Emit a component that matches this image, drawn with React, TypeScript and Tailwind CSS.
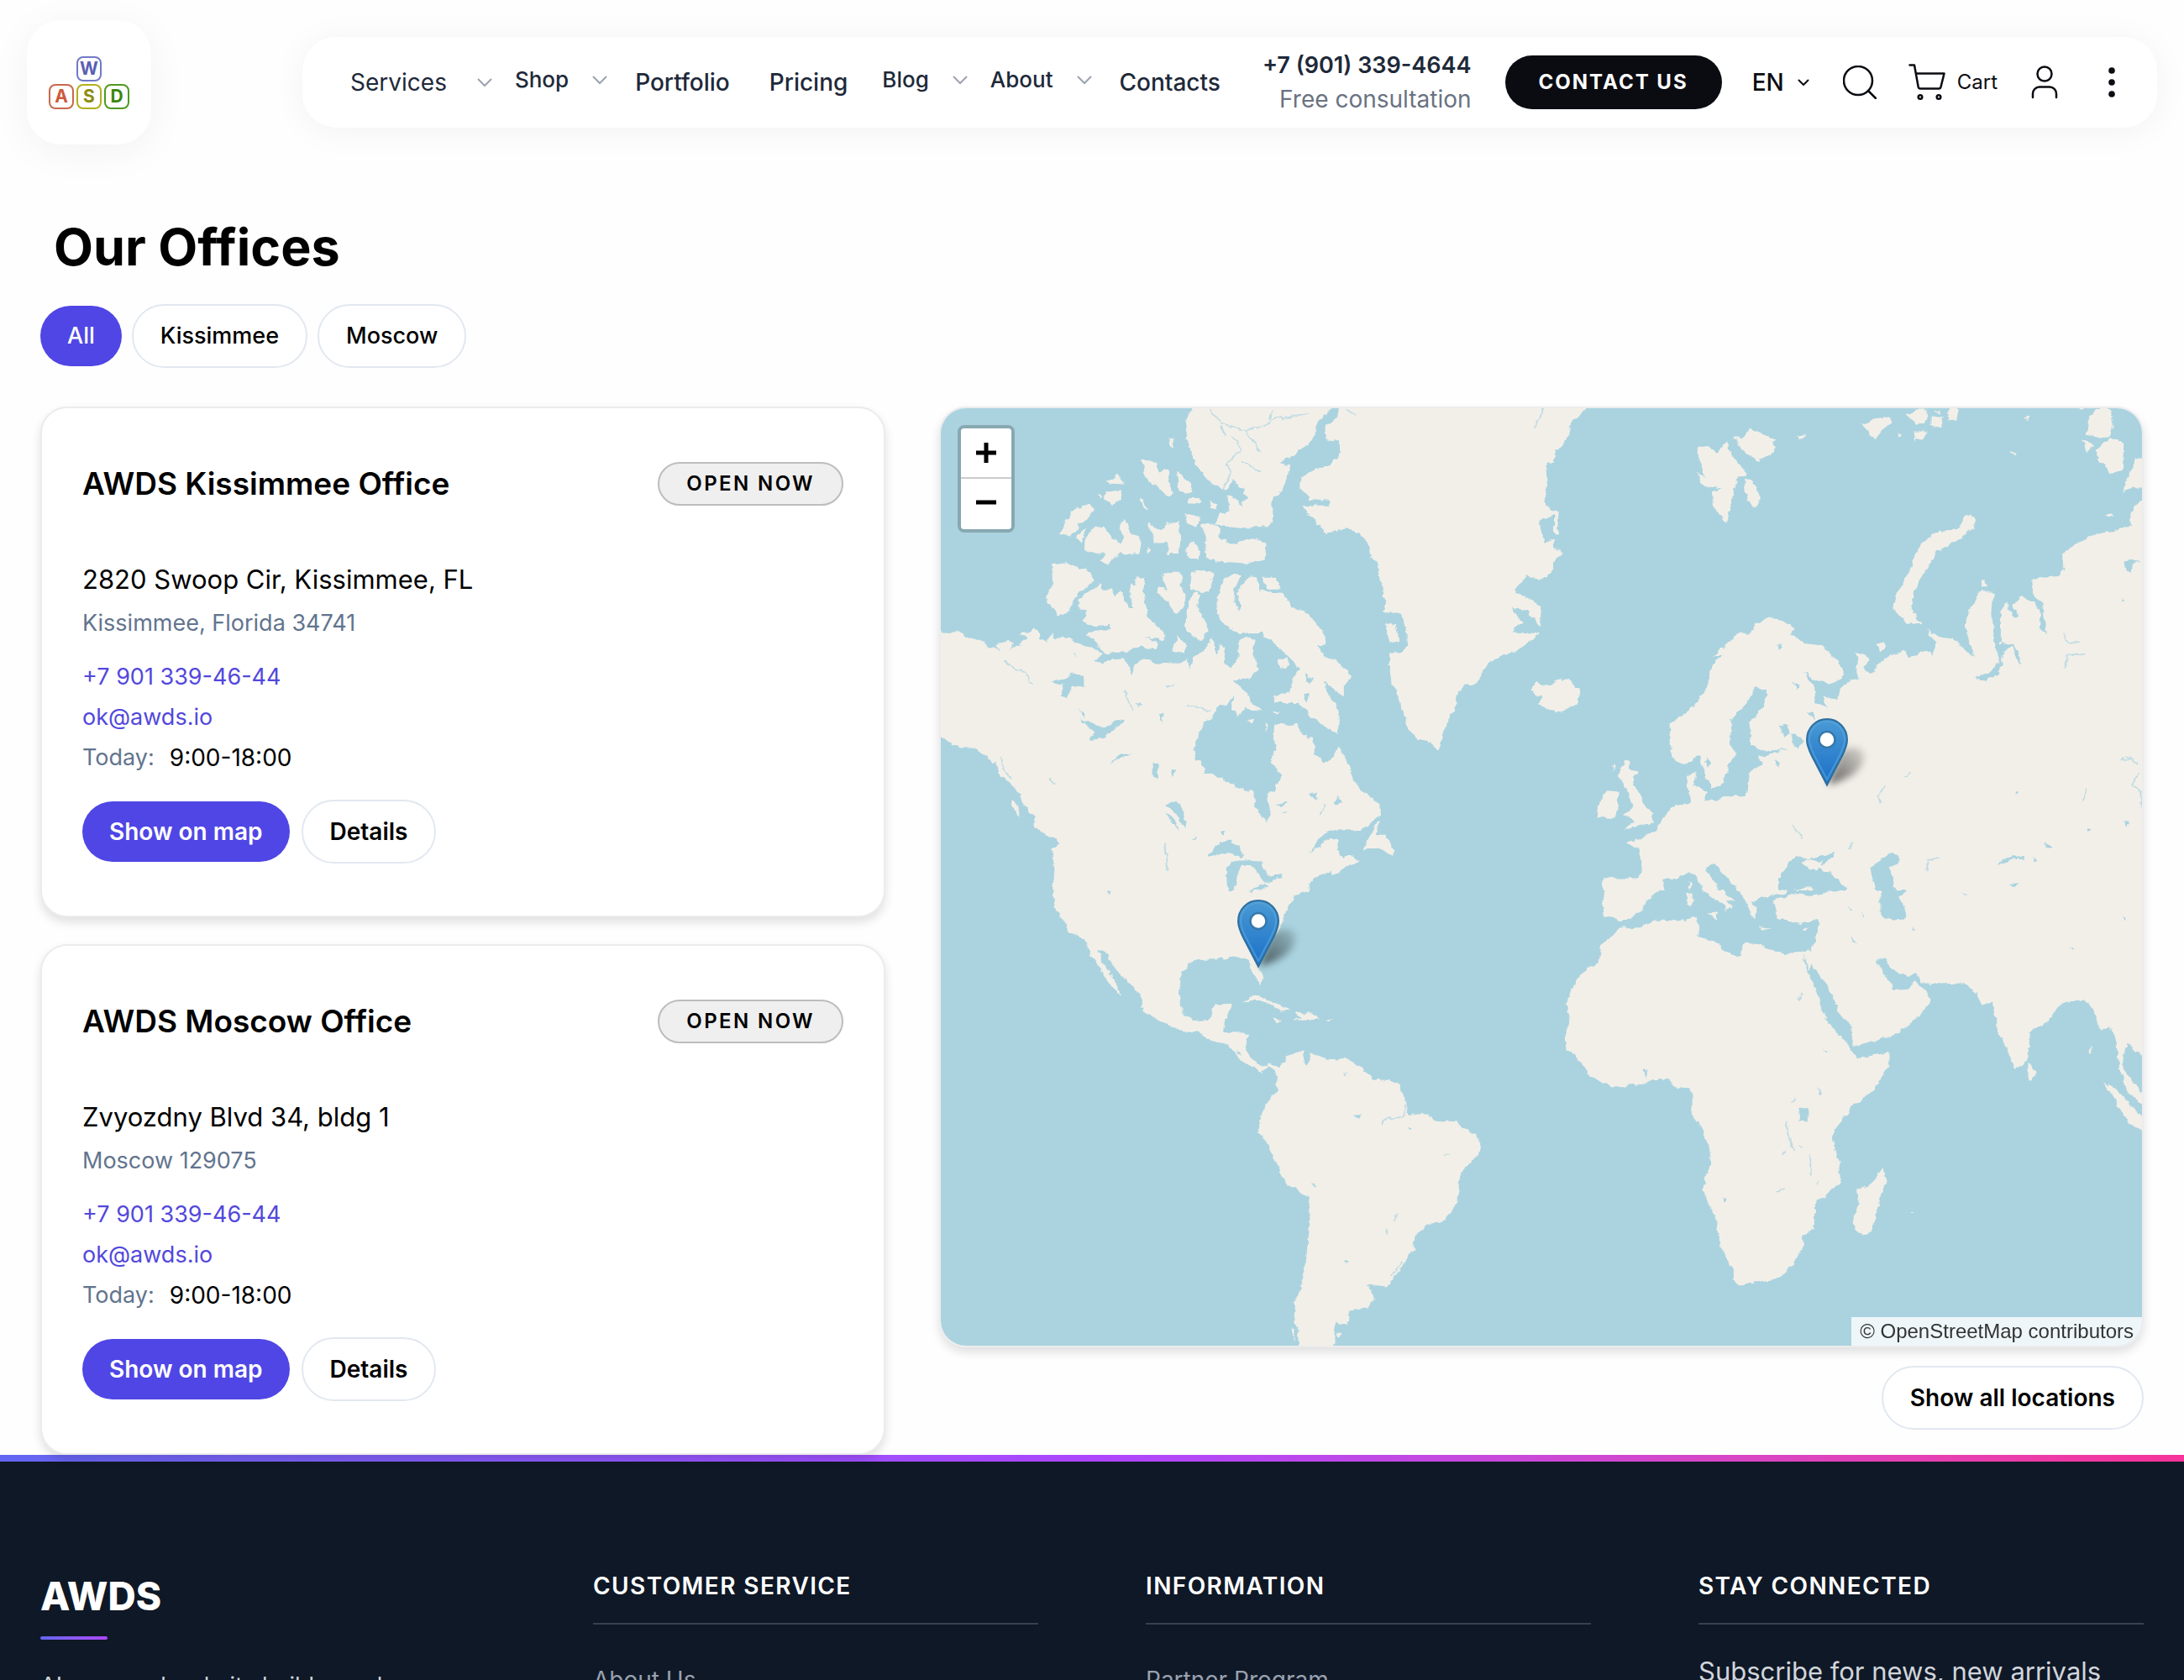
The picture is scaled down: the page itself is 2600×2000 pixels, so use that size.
import { ReactNode } from "react";

const bodyFont = "font-['Inter','Noto_Sans',sans-serif]";

/* ---------- Logo ---------- */

const keys = [
  { letter: "W", x: 34, y: 1, stroke: "#7179c6", fill: "#5a60b4" },
  { letter: "A", x: 1, y: 34, stroke: "#c8684c", fill: "#cc5a38" },
  { letter: "S", x: 34, y: 34, stroke: "#b2b01c", fill: "#8c8c10" },
  { letter: "D", x: 67, y: 34, stroke: "#4f9a20", fill: "#3b860e" },
];

function Logo() {
  return (
    <svg viewBox="0 0 96 63" className="w-24" role="img" aria-label="AWDS">
      {keys.map((k) => (
        <g key={k.letter}>
          <rect x={k.x} y={k.y} width="28" height="28" rx="7" fill="none" stroke={k.stroke} strokeWidth="2" />
          <text x={k.x + 14} y={k.y + 21} textAnchor="middle" fontFamily="Inter, sans-serif" fontWeight="700" fontSize="21" fill={k.fill}>
            {k.letter}
          </text>
        </g>
      ))}
    </svg>
  );
}

/* ---------- Header ---------- */

function Chevron() {
  return (
    <svg viewBox="0 0 18 12" className="h-3 w-[18px]" fill="none" stroke="#9ca3af" strokeWidth="2" aria-hidden="true">
      <path d="M1 2l8 8 8-8" />
    </svg>
  );
}

function PlainLink({ children }: { children: ReactNode }) {
  return (
    <a href="#" className="px-3.5">
      {children}
    </a>
  );
}

function MenuLink({ children }: { children: ReactNode }) {
  return (
    <a href="#" className="flex items-center gap-7 pb-1.5 pl-2 text-[26px]">
      {children}
      <Chevron />
    </a>
  );
}

function Header() {
  return (
    <header className="flex items-center justify-between px-8 pt-6">
      <a
        href="#"
        className="flex size-[148px] items-center justify-center rounded-[40px] bg-white shadow-[0_8px_48px_rgba(0,0,0,0.05)]"
      >
        <Logo />
      </a>
      <div className="flex h-[108px] items-center rounded-[40px] bg-white pr-12 pl-[43px] text-[28px] leading-10 font-medium whitespace-nowrap text-[#1e2939] shadow-[0_4px_40px_rgba(0,0,0,0.05)]">
        <nav className="flex items-center gap-[19px]">
          <a href="#" className="flex items-center gap-9 pl-3.5 font-normal">
            Services
            <Chevron />
          </a>
          <MenuLink>Shop</MenuLink>
          <PlainLink>Portfolio</PlainLink>
          <PlainLink>Pricing</PlainLink>
          <MenuLink>Blog</MenuLink>
          <MenuLink>About</MenuLink>
          <PlainLink>Contacts</PlainLink>
        </nav>
        <div className="ml-9 flex flex-col text-right">
          <a href="tel:+79013394644" className="text-[27px] font-semibold">
            +7 (901) 339-4644
          </a>
          <span className="font-normal text-[#6a7282]">Free consultation</span>
        </div>
        <button className="ml-10 h-16 rounded-full bg-[#0a0c12] px-10 text-[24px] font-bold tracking-[2px] text-white">CONTACT US</button>
        <button className="ml-9 flex items-center gap-4 text-[#0a0c12]">
          EN
          <svg viewBox="0 0 14 9" className="h-[9px] w-3.5" fill="none" stroke="currentColor" strokeWidth="2" strokeLinecap="round" strokeLinejoin="round" aria-hidden="true">
            <path d="M1.5 1.5L7 7l5.500-5.500" />
          </svg>
        </button>
        <button className="ml-10" aria-label="Search">
          <svg viewBox="0 0 40 40" className="size-10" fill="none" stroke="#0a0c12" strokeWidth="2.500" strokeLinecap="round">
            <circle cx="18" cy="18" r="17" />
            <path d="M30 30l9 9" />
          </svg>
        </button>
        <a href="#" className="ml-[38px] flex items-center gap-3.5 text-[24px] font-normal text-[#0a0c12]">
          <svg viewBox="0 0 44 44" className="size-11" fill="none" stroke="currentColor" strokeWidth="2.500" strokeLinecap="round" strokeLinejoin="round" aria-hidden="true">
            <path d="M1.500 1.500H7l4.700 26a2.500 2.500 0 0 0 2.500 2H36a2.500 2.500 0 0 0 2.500-2L42.500 11.500H9" />
            <circle cx="14" cy="39.500" r="2.300" />
            <circle cx="36" cy="39.500" r="2.300" />
          </svg>
          Cart
        </a>
        <button className="ml-10" aria-label="Account">
          <svg viewBox="0 0 32 40" className="h-10 w-8" fill="none" stroke="#0a0c12" strokeWidth="2.500" strokeLinecap="round">
            <circle cx="16" cy="10" r="8.500" />
            <path d="M2 38v-4.500a8 8 0 0 1 8-8h12a8 8 0 0 1 8 8V38" />
          </svg>
        </button>
        <button className="ml-[58px]" aria-label="More">
          <svg viewBox="0 0 12 36" className="h-9 w-3" fill="#0a0c12">
            <circle cx="6" cy="4" r="3.800" />
            <circle cx="6" cy="18" r="3.800" />
            <circle cx="6" cy="32" r="3.800" />
          </svg>
        </button>
      </div>
    </header>
  );
}

/* ---------- Buttons ---------- */

const actionText = "text-[28px] font-semibold";
const filterText = "text-[27px] font-medium";

function PrimaryButton({ children, text = actionText }: { children: ReactNode; text?: string }) {
  return <button className={`h-[72px] rounded-[36px] bg-[#4f46e5] px-8 text-white ${text}`}>{children}</button>;
}

function OutlineButton({ children, text = actionText }: { children: ReactNode; text?: string }) {
  return <button className={`h-[76px] rounded-[38px] border-2 border-[#e2e8f0] bg-white px-8 text-black ${text}`}>{children}</button>;
}

/* ---------- Office cards ---------- */

type Office = { name: string; street: string; city: string };

const offices: Office[] = [
  { name: "AWDS Kissimmee Office", street: "2820 Swoop Cir, Kissimmee, FL", city: "Kissimmee, Florida 34741" },
  { name: "AWDS Moscow Office", street: "Zvyozdny Blvd 34, bldg 1", city: "Moscow 129075" },
];

function OfficeCard({ office }: { office: Office }) {
  return (
    <article className="relative z-10 rounded-[32px] border-2 border-[#ececee] bg-white px-12 pt-16 pb-[62px] text-[27px] leading-10 shadow-[0_6px_12px_rgba(0,0,0,0.12)]">
      <div className="flex items-center justify-between">
        <h2 className="text-[37px] leading-[52px] font-semibold">{office.name}</h2>
        <span className="flex h-[52px] items-center rounded-full border-2 border-[#bdbdbd] bg-[#efefef] px-8 text-[24px] font-semibold tracking-widest">
          OPEN NOW
        </span>
      </div>
      <p className="mt-16 text-[31px] leading-[48px]">{office.street}</p>
      <p className="mt-2 text-[#62748e]">{office.city}</p>
      <p className="mt-6">
        <a href="tel:+79013394644" className="text-[#5248dc]">
          +7 901 339-46-44
        </a>
      </p>
      <p className="mt-2">
        <a href="mailto:ok@awds.io" className="text-[#5248dc]">
          ok@awds.io
        </a>
      </p>
      <p className="mt-2 flex gap-[18px]">
        <span className="text-[#62748e]">Today:</span>
        <span className="text-[28px]">9:00-18:00</span>
      </p>
      <div className="mt-[30px] flex items-center gap-3.5">
        <PrimaryButton>Show on map</PrimaryButton>
        <OutlineButton>Details</OutlineButton>
      </div>
    </article>
  );
}

/* ---------- Map ---------- */

type Tile = { id: string; x: number; y: number; w: number; h: number; land: string; water?: string; rivers?: string; islands?: string };

const tiles: Tile[] = [
  {
    id: "nw",
    x: -20,
    y: -26,
    w: 750,
    h: 600,
    land: [
      "M-60 762L42 762 60 768 90 766 115 783 140 790 165 812 190 822 180 806 210 790 225 800 212 822 240 800 258 780 235 772 262 766 276 748 290 785 308 796 316 766 324 790 345 778 365 785 400 808 430 815 445 835 425 852 445 860 470 850 500 848 512 870 518 900 522 870 545 848 560 850 575 862 600 860 635 862 655 850 662 880 672 845 700 820 712 785 722 800 728 840 738 800 752 830 748 860 765 878 780 850 785 790 800 778 825 790 818 830 832 880 810 908 766 910 780 925 805 960 820 990 842 1008 820 1012 800 995 782 1025 765 1005 770 965 752 988 728 1000 715 1030 700 1045 685 1080 672 1120 674 1160 690 1165 700 1205 715 1205 760 1235 795 1258 820 1258 825 1310 850 1355 862 1330 855 1270 875 1255 887 1210 865 1165 877 1130 870 1090 872 1050 900 1055 925 1050 945 1085 968 1095 972 1140 998 1172 1020 1155 1030 1115 1045 1150 1060 1180 1068 1225 1085 1255 1110 1275 1132 1300 1133 1335 1110 1365 1085 1380 1010 1382 985 1405 958 1453 990 1422 1010 1405 1033 1410 1028 1440 1040 1465 1070 1462 1082 1475 1050 1495 1018 1525 1015 1508 975 1525 958 1550 955 1568V1600H320V1568L325 1500 318 1440 340 1420 330 1410 300 1395 275 1370 275 1340 250 1305 240 1270 215 1235 190 1215 175 1170 150 1145 120 1125 90 1125 60 1105 42 1095H-60Z",
      "M318 555L350 547 385 565 402 565 425 605 385 640 370 680 350 705 335 718 322 688 302 675 312 635 322 605Z",
      "M385 660L440 612 447 635 470 632 475 655 485 630 495 655 510 690 520 690 512 635 515 612 530 622 528 592 550 592 546 640 558 720 598 768 595 788 550 780 585 800 580 818 540 812 500 825 450 832 430 800 405 775 425 760 465 755 462 742 410 745 392 728 408 700 382 685Z",
      "M592 585L640 572 645 600 638 620 652 650 645 690 628 708 605 665 578 640 582 625 605 635Z",
      "M665 575L695 570 722 577 708 640 690 640 660 632Z",
      "M668 645L688 645 680 680 695 720 708 760 695 790 670 780 650 750 655 690Z",
      "M632 775L655 805 645 830 620 822Z",
      "M740 620L755 590 788 585 775 620 772 670 790 700 780 640 800 600 825 590 835 635 868 640 890 645 905 660 915 690 945 695 975 735 998 775 1000 805 975 805 1000 840 1030 855 1067 905 1045 930 1045 965 1015 935 995 915 1000 945 1030 1000 1035 1040 1028 1080 995 1055 960 1020 930 985 875 985 870 960 910 950 920 905 935 880 915 850 890 820 860 790 840 768 800 768 760 755 735 725 728 690 730 650Z",
      "M840 595L875 595 890 632 860 632Z",
      "M803 1045L822 1033 818 1050ZM848 1050L855 1052 850 1073ZM880 850L905 842 905 870 888 882ZM865 1010L885 1012 878 1025Z",
      "M690 428L720 425 735 445 735 470 770 490 800 480 825 472 852 490 848 540 800 550 730 545 700 530 703 480Z",
      "M650 500L670 485 688 510 682 542 655 525ZM552 500L563 508 556 520ZM650 395L688 405 680 440 655 425Z",
      "M555 422L575 440 590 450 600 425 635 420 638 480 635 520 605 520 605 485 575 490 570 460Z",
      "M400 480L425 432 450 440 468 470 490 490 498 470 488 430 500 410 512 455 535 465 543 490 535 522 485 520 460 552 438 545 450 520 400 512Z",
      "M338 460L350 420 380 378 412 365 422 380 410 415 385 425 385 445 360 465Z",
      "M452 300L485 273 498 305ZM455 328L492 322 488 350 468 372 448 350ZM432 330L445 340 438 350ZM380 470L405 435 390 488Z",
      "M542 230L565 226 590 265 605 260 618 340 600 335 580 310 560 300 548 270ZM630 268L660 300 668 330 650 338 632 305ZM655 345L688 345 685 362 657 362ZM608 160L620 165 622 190 612 185ZM537 345L545 350 557 388 548 380ZM712 355L730 365 725 385 715 378Z",
      "M665 68L680 40H1020L1012 68 985 105 970 150 950 190 925 205 915 220 885 235 912 245 905 280 890 330 870 345 865 375 872 410 855 440 800 440 725 430 735 400 760 385 755 340 775 345 790 370 805 345 790 315 765 290 760 315 740 320 715 300 685 260 670 220 660 190 650 160 655 110Z",
      "M1036 40L1030 90 1025 105 998 125 1000 165 1035 170 1035 205 1015 242 975 255 940 285 935 315 960 350 1010 355 1010 370 940 372 955 400 985 430 1000 460 1050 440 1085 460 1105 485 1110 520 1128 550 1140 620 1150 680 1140 700 1185 705 1200 760 1205 810 1185 830 1160 830 1160 910 1180 970 1205 1060 1230 1100 1255 1105 1278 1130 1290 1095 1300 1045 1320 1005 1325 960 1345 930 1375 925 1400 870 1420 850 1480 820 1534 766 1462 762 1490 735 1460 685 1500 700 1535 745 1535 680 1470 635 1500 590 1540 600 1568 570 1568 40Z",
      "M1150 735L1175 740 1182 790 1155 797ZM1508 945L1525 915 1540 932 1568 925H1575V1010H1568L1530 992 1538 970Z",
      "M1130 1350L1136 1352 1122 1390 1150 1395 1168 1440 1165 1458 1140 1440 1095 1440 1110 1400ZM215 1286L228 1292 240 1338 226 1322Z",
    ].join(""),
    water:
      "M705 1460L735 1420 760 1412 785 1430 792 1465 765 1452 735 1458ZM755 1568L752 1500 765 1480 800 1472 840 1480 848 1510 828 1515 812 1490 795 1488 780 1520 772 1568ZM828 1500L845 1510 865 1525 890 1515 888 1528 850 1545 840 1535ZM808 1566L850 1550 860 1556 830 1568ZM600 1300L630 1288 645 1320 652 1375 640 1360 628 1330 612 1312ZM600 1325L622 1345 635 1382 618 1360ZM310 920L350 905 375 890 398 905 398 932 370 935 355 968 340 960 348 930ZM385 1035L430 1055 455 1060 480 1035 502 1038 470 1070 445 1095 412 1100 425 1075ZM463 1168L490 1145 518 1142 490 1158ZM570 1170L585 1180 580 1225 570 1210ZM615 1190L630 1195 620 1218ZM585 1020L598 1015 592 1045ZM1018 1295L1030 1275 1042 1290 1025 1305ZM875 1300L905 1290 895 1305ZM960 1270L975 1265 978 1290ZM738 1385L750 1380 748 1400ZM668 1410L680 1395 675 1412ZM946 890L970 910 958 928ZM945 955L960 960 950 980ZM1550 240H1575V395L1545 370 1552 300ZM1533 420L1568 400 1568 470 1545 490ZM385 1005L400 1020 398 1030ZM527 985L545 990 535 995Z",
    rivers:
      "M712 68L728 102 760 128 800 135 845 128 872 100 955 85M800 135L820 175 835 202M735 120L750 150M745 320L765 265 750 245 790 195 768 155M790 235L835 262M865 70L860 105M515 120L535 68M200 850L225 880 255 890 268 930M370 830L378 840M500 945L520 1010M655 990L710 1010M985 1330L1000 1300M890 1330L905 1320M598 1420L605 1505M312 1218L325 1240M1050 70L1075 92M190 1150L200 1190 215 1225M1520 130L1540 70M600 930L620 930",
  },
  {
    id: "ne",
    x: 730,
    y: -26,
    w: 750,
    h: 600,
    land: [
      "M122 1600V1530L210 1530 218 1490 210 1440 178 1420 210 1410 250 1385 270 1345 300 1305 340 1295 335 1260 328 1215 355 1195 350 1240 378 1262 375 1290 400 1290 440 1270 478 1275 485 1205 505 1185 520 1172 508 1152 550 1140 580 1128 522 1135 492 1120 486 1045 520 1000 531 945 500 935 483 980 440 1040 437 1110 452 1140 432 1180 425 1230 392 1252 375 1200 362 1150 345 1160 325 1182 300 1165 290 1110 290 1050 330 1010 360 980 378 940 390 880 420 830 395 840 430 800 460 765 485 770 500 740 535 720 570 730 597 755 590 770 625 800 660 805 700 845 720 885 715 910 690 925 655 915 620 890 645 930 650 980 680 1002 670 965 705 975 710 940 740 915 760 910 752 870 760 845 745 828 775 835 785 855 770 870 775 890 800 890 800 870 830 840 870 820 880 842 930 820 942 835 950 800 928 755 955 778 990 785 1020 815 1045 842 1030 785 1025 720 1050 660 1060 635 1095 640 1090 700 1095 790 1110 850 1085 890 1045 905 1075 917 1110 890 1118 820 1140 810 1160 870 1160 830 1142 805 1112 800 1112 700 1128 675 1140 710 1160 720 1138 680 1165 650 1200 680 1212 700 1208 750 1225 780 1218 690 1192 640 1190 600 1255 590 1268 570 1265 520 1300 490 1350 460 1410 445 1435 432 1435 390 1463 355H1600V1600Z",
      "M0 40H90L80 68 65 90 48 108 30 165 15 195-8 200V40ZM-8 380L12 385 8 460-8 450ZM-8 495L22 518-8 555ZM-8 920L38 910 68 955 55 990 20 1012-8 1018Z",
      "M175 1165L190 1168 188 1190 208 1195 195 1230 210 1260 225 1305 250 1325 245 1355 170 1382 200 1350 172 1335 198 1310 185 1260 160 1210ZM130 1260L160 1262 158 1315 140 1345 108 1340 112 1290ZM355 1260L372 1262 368 1282ZM145 1180L155 1175 150 1195Z",
      "M358 190L385 185 408 205 428 170 445 215 482 275 455 282 430 425 395 370 393 330 415 320 370 310 356 265 378 285 360 225ZM445 155L465 165 490 130 550 165 545 205 510 235 470 200ZM475 280L490 290 515 345 500 380 480 355ZM605 155L622 146 625 156 610 166Z",
      "M768 120L800 100 835 95 842 112 815 140 800 165 785 145ZM878 90L900 72 925 72 932 105 905 118ZM896 140L930 140 922 158 900 168ZM940 92L970 98 962 132 940 125ZM985 68H1007L1002 105 978 108ZM855 145L868 150 860 158ZM945 80L960 72 962 85ZM1168 98L1182 92 1180 105ZM1135 200L1152 212 1142 216Z",
      "M1035 398L1050 410 1045 440 1010 475 950 520 920 580 895 640 890 690 912 740 880 740 845 690 855 640 880 590 900 520 930 470 960 450 1000 445 1020 405Z",
      "M1335 90L1350 68 1380 68 1392 110 1385 155 1365 160 1325 148ZM1350 195L1385 160 1418 175 1415 265 1385 268 1355 230ZM1315 165L1345 185 1325 202ZM1450 225L1480 230V312L1430 318 1413 332 1430 280ZM803 800L820 792 826 808 812 824ZM1062 625L1070 603 1080 625ZM1370 400L1385 395 1390 408ZM1302 65L1318 65 1312 76Z",
    ].join(""),
    water:
      "M268 1600L275 1530 305 1532 340 1508 355 1525 372 1568V1600ZM378 1490L400 1485 430 1525 460 1568V1600H420L405 1545 380 1515ZM560 1530L580 1490 602 1460 630 1470 618 1482 640 1508 662 1500 690 1520 725 1560V1600H560ZM630 1470L680 1455 697 1450 690 1468 672 1490 655 1478ZM787 1500L820 1465 840 1453 860 1460 858 1485 833 1495 845 1530 842 1555 870 1575 872 1600H812L795 1550ZM1105 1490L1120 1465 1175 1460 1168 1468 1140 1470 1115 1485ZM590 1080L615 1090 622 1105 605 1125 595 1112ZM562 1058L580 1050 585 1080 570 1090ZM555 805L570 800 560 820ZM627 1008L645 1015 650 1040 635 1025ZM595 920L612 930 605 945ZM1420 545L1440 538 1463 545 1440 550 1438 580 1425 570ZM378 1160L392 1165 382 1185ZM550 1158L562 1165 558 1188ZM1420 1350L1428 1355 1424 1375ZM1326 1375L1340 1378 1330 1385ZM1148 1262L1158 1268 1150 1272ZM1190 1460L1205 1475 1198 1480ZM1222 1420L1238 1435 1225 1438ZM1135 1550L1160 1548 1150 1556ZM1410 660L1420 662 1412 668Z",
    islands: "M630 1480L672 1478 655 1505 640 1506ZM590 1600L600 1565 640 1560 670 1580V1600ZM335 1540L342 1545 340 1568 334 1560Z",
    rivers:
      "M445 1220L455 1170M822 1245L805 1275 815 1300M875 1215L885 1200M590 1365L620 1405M740 1420L735 1440M925 1510L930 1475 960 1465M1270 770L1280 800 1310 795M1270 880L1275 840 1320 830M1410 1165L1435 1155 1455 1175M1455 1200L1440 1235 1460 1260 1463 1310M1315 1290L1325 1250M655 1520L690 1515M1205 465L1207 500",
  },
  {
    id: "sw",
    x: -20,
    y: 574,
    w: 750,
    h: 600,
    land: [
      "M320-20V20L325 45 345 90 365 130 400 150 415 200 440 250 465 300 492 328 480 290 455 245 433 190 445 185 470 230 500 275 540 325 545 375 600 415 650 440 680 435 710 465 760 485 785 525 840 568 845 555 860 545 880 575 878 625 850 665 838 710 832 750 860 800 890 880 905 915 960 955 963 1010 955 1100 948 1190 925 1280 920 1340 932 1370 930 1450H1020L1022 1345 1055 1350 1058 1308 1105 1300 1122 1265 1102 1225 1150 1232 1180 1190 1220 1115 1222 1070 1265 1032 1298 1028 1325 975 1335 880 1380 820 1385 790 1375 758 1355 752 1325 722 1275 718 1240 692 1205 700 1200 655 1185 605 1160 590 1120 590 1070 535 1045 522 1015 528 965 508 952 545 942 535 945 500 905 515 880 558 865 537 840 548 810 515 800 490 807 455 795 440 742 440 752 400 765 352 725 355 712 402 675 405 650 390 635 330 640 255 670 218 720 215 770 205 805 215 820 265 838 292 845 270 830 225 850 180 880 130 905 60 920 15 965-2V-20Z",
      "M793 345L825 323 865 345 912 373 885 375 850 345ZM925 378L965 380 985 400 950 405 915 402 940 398ZM868 398L888 403 875 410ZM1000 400L1018 403 1005 408ZM915 1362L925 1365 920 1400ZM1025 1375L1042 1378 1030 1390Z",
    ].join(""),
    water:
      "M963 910L978 918 975 925ZM1045 1152L1058 1155 1052 1163ZM1070 700L1090 698 1082 712ZM455 -5L463 5 460 15ZM780 500L788 512 782 512ZM1203 735L1212 745 1208 748ZM1046 565L1054 570 1050 576ZM810 -5L822 0 815 5Z",
    rivers: "M1140 730L1145 712 1190 705 1200 670M1170 1025L1178 1005M1165 1200L1190 1155M1295 825L1310 820M1148 1070L1152 1055",
  },
  {
    id: "se",
    x: 730,
    y: 574,
    w: 750,
    h: 660,
    land: [
      "M125-20V0L120 30 125 72 155 80 165 90 215 62 228 30 250 12 268 0V-20ZM372-20V0L385 15 410 30 430 50 425 60 445 45 425 25 450 30 425 10 420-20ZM380 65L410 63 405 82ZM330 10L345 8 342 42 330 40ZM462-20V0L480 40 497 85 505 50 490 30 535 18 575 8 590-20ZM508 105L540 108 515 112ZM615 112L635 105 625 117Z",
      "M545 25L600 10 650 15 700 5 740-20H812V65L840 85 872 82 875 50 858 20 875 0V-20H1600V470H1463L1425 435 1412 490 1430 525 1463 570 1600 640V680L1463 608 1430 570 1405 500 1400 430 1385 385 1360 400 1350 350 1320 305 1262 320 1225 375 1185 400 1180 480 1150 508 1105 395 1090 315 1065 325 1050 290 1020 262 965 265 915 262 905 235 880 245 845 225 820 188 802 198 830 245 845 283 880 280 898 255 940 305 915 350 885 380 850 405 748 445 740 385 710 350 690 290 640 205 637 228 617 175 640 170 655 120 658 82 615 95 595 90 555 80Z",
      "M165 105L215 105 245 85 300 85 355 78 360 110 355 130 410 150 430 180 465 185 470 155 495 148 530 165 575 178 617 175 630 225 655 290 670 350 700 400 735 440 755 475 835 458 835 490 800 560 745 610 710 655 693 695 700 740 712 770 712 825 690 850 650 885 650 960 620 975 618 1015 590 1065 555 1098 500 1108 465 1118 445 1100 445 1070 415 1010 402 930 385 880 370 850 375 810 392 770 385 720 370 680 340 630 347 570 335 560 300 555 285 532 240 538 210 550 140 557 80 515 65 480 30 450 27 415 38 370 30 320 55 260 80 220 110 205 120 150 155 120Z",
      "M818 785L828 825 815 860 790 965 768 975 750 960 745 920 758 890 755 845 790 830ZM1180 485L1200 515 1190 535 1180 530ZM1365 540L1395 560 1463 640 1500 670V710L1463 685 1430 655 1400 600ZM1333 435L1337 450 1330 465ZM885 908L895 908 890 914Z",
    ].join(""),
    water:
      "M608 618L637 615 630 652 608 652ZM418 870L430 872 425 880ZM735 48L745 50 740 55ZM765 60L772 70 770 78ZM1415 75L1428 78 1422 85ZM890 105L902 108 895 113ZM1015 8L1030 12 1022 15ZM1285 160L1292 164 1288 168ZM655 555L665 580 658 575ZM670 452L677 453 673 458ZM220 505L232 510 230 530ZM740 125L752 150 745 145Z",
    rivers: "M578 650L582 690 598 735M635 750L642 810M655 820L650 830M605 310L620 290M590 600L600 590M555 858L572 845M568 745L575 738M610 722L618 730",
  },
];

function WorldMap() {
  return (
    <svg viewBox="0 0 1430 1116" preserveAspectRatio="xMidYMid slice" className="block w-full bg-[#aad3df]" role="img" aria-label="World map">
      <defs>
        <filter id="coast" x="-20" y="-20" width="1480" height="1160" filterUnits="userSpaceOnUse" colorInterpolationFilters="sRGB">
          <feTurbulence type="fractalNoise" baseFrequency="0.11" numOctaves="3" seed="4" result="noise" />
          <feDisplacementMap in="SourceGraphic" in2="noise" scale="7" xChannelSelector="R" yChannelSelector="G" />
        </filter>
      </defs>
      <g filter="url(#coast)">
        {tiles.map((t) => (
          <svg key={t.id} x={t.x} y={t.y} width={t.w} height={t.h} viewBox="0 0 1568 1568" preserveAspectRatio="none">
            <path d={t.land} fill="#f2efe9" />
            <path d={t.water} fill="#aad3df" />
            <path d={t.islands} fill="#f2efe9" />
            <path d={t.rivers} fill="none" stroke="#aad3df" strokeWidth="4" strokeLinejoin="round" opacity="0.7" />
          </svg>
        ))}
      </g>
    </svg>
  );
}

function Pin() {
  return (
    <svg viewBox="0 0 82 82" className="size-[82px] overflow-visible" aria-hidden="true">
      <defs>
        <linearGradient id="pinFill" x1="0" y1="0" x2="0" y2="1">
          <stop offset="0" stopColor="#4a9ad4" />
          <stop offset="1" stopColor="#1a70c8" />
        </linearGradient>
        <linearGradient id="pinShade" x1="0" y1="1" x2="0.9" y2="0.1">
          <stop offset="0" stopColor="#000" stopOpacity="0.6" />
          <stop offset="1" stopColor="#000" stopOpacity="0.15" />
        </linearGradient>
        <filter id="pinBlur" x="-50%" y="-50%" width="200%" height="200%">
          <feGaussianBlur stdDeviation="4" />
        </filter>
      </defs>
      <path d="M26 79L42 40Q58 30 68 40Q72 54 56 67Q42 76 26 79Z" fill="url(#pinShade)" filter="url(#pinBlur)" />
      <path d="M25 1C11.500 1 1 12 1 25.500C1 33 4 39 7 45L25 79.500L43 45C46 39 49 33 49 25.500C49 12 38.500 1 25 1Z" fill="url(#pinFill)" stroke="#2e6f9e" strokeWidth="2" />
      <path d="M25 4C13 4 4 13.500 4 25.500C4 32 7 38 9.500 43.500L25 73L40.500 43.500C43 38 46 32 46 25.500C46 13.500 37 4 25 4Z" fill="none" stroke="#5ba6dc" strokeWidth="2" opacity="0.6" />
      <circle cx="25" cy="25.500" r="9.500" fill="#fff" stroke="#3578ab" strokeWidth="2.500" />
    </svg>
  );
}

function MapPanel() {
  return (
    <div>
      <div className="relative overflow-hidden rounded-[32px] border-2 border-[#ececee] shadow-[0_6px_12px_rgba(0,0,0,0.12)]">
        <WorldMap />
        <div className="absolute top-5 left-5 flex flex-col rounded-lg border-4 border-black/20 bg-clip-padding">
          <button aria-label="Zoom in" className="flex size-[60px] items-center justify-center rounded-t border-b-2 border-[#ccc] bg-white">
            <svg viewBox="0 0 24 24" className="size-6" stroke="#000" strokeWidth="5">
              <path d="M0 12h24M12 0v24" />
            </svg>
          </button>
          <button aria-label="Zoom out" className="flex size-[60px] items-center justify-center rounded-b bg-white pb-1">
            <svg viewBox="0 0 24 24" className="size-6" stroke="#000" strokeWidth="5">
              <path d="M0 12h24" />
            </svg>
          </button>
        </div>
        <button aria-label="AWDS Moscow Office" className="absolute top-[40.4%] left-[73.8%] -mt-[82px] -ml-[25px]">
          <Pin />
        </button>
        <button aria-label="AWDS Kissimmee Office" className="absolute top-[59.8%] left-[26.4%] -mt-[82px] -ml-[25px]">
          <Pin />
        </button>
        <p className="absolute right-0 bottom-0 bg-white/80 px-2.5 font-['Liberation_Sans',sans-serif] text-[24px] leading-[34px] text-[#333]">
          © OpenStreetMap contributors
        </p>
      </div>
      <div className="mt-[22px] flex justify-end">
        <OutlineButton>Show all locations</OutlineButton>
      </div>
    </div>
  );
}

/* ---------- Footer ---------- */

function FooterHeading({ children }: { children: ReactNode }) {
  return <h3 className="border-b-2 border-[#364153] pb-6 text-[28px] leading-10 font-semibold tracking-wider text-white">{children}</h3>;
}

function Footer() {
  return (
    <footer className="bg-[#0f1826]">
      <div className="h-2 bg-linear-to-r from-[#6366f1] via-[#ad46ff] to-[#f6339a]" />
      <div className="grid grid-cols-4 gap-32 px-12 pt-32 text-[28px] leading-10">
        <div>
          <p className="text-[46px] leading-[64px] font-extrabold text-white">AWDS</p>
          <div className="mt-4 h-1 w-20 rounded-full bg-linear-to-r from-[#6366f1] to-[#ad46ff]" />
          <p className="mt-8 max-w-[440px] text-[27px] leading-[46px] text-[#d1d5dc]">AI-powered website builder and online store platform</p>
        </div>
        <div>
          <FooterHeading>CUSTOMER SERVICE</FooterHeading>
          <a href="#" className="mt-[46px] block text-[#99a1af]">
            About Us
          </a>
        </div>
        <div>
          <FooterHeading>INFORMATION</FooterHeading>
          <a href="#" className="mt-[46px] block text-[#99a1af]">
            Partner Program
          </a>
        </div>
        <div>
          <FooterHeading>STAY CONNECTED</FooterHeading>
          <p className="mt-8 text-[31px] leading-[48px] text-[#d1d5dc]">Subscribe for news, new arrivals and offers</p>
        </div>
      </div>
    </footer>
  );
}

/* ---------- Page ---------- */

export default function App() {
  return (
    <div className={`h-screen overflow-hidden bg-[#fefefe] text-black ${bodyFont}`}>
      <Header />
      <main className="px-12 pt-[86px]">
        <h1 className="px-4 text-[61px] leading-[72px] font-bold">Our Offices</h1>
        <div className="mt-8 flex items-center gap-3">
          <PrimaryButton text={filterText}>All</PrimaryButton>
          <OutlineButton text={filterText}>Kissimmee</OutlineButton>
          <OutlineButton text={filterText}>Moscow</OutlineButton>
        </div>
        <div className="mt-[46px] grid grid-cols-[503fr_717fr] gap-16">
          <div className="flex flex-col gap-8">
            {offices.map((o) => (
              <OfficeCard key={o.name} office={o} />
            ))}
          </div>
          <MapPanel />
        </div>
      </main>
      <Footer />
    </div>
  );
}
